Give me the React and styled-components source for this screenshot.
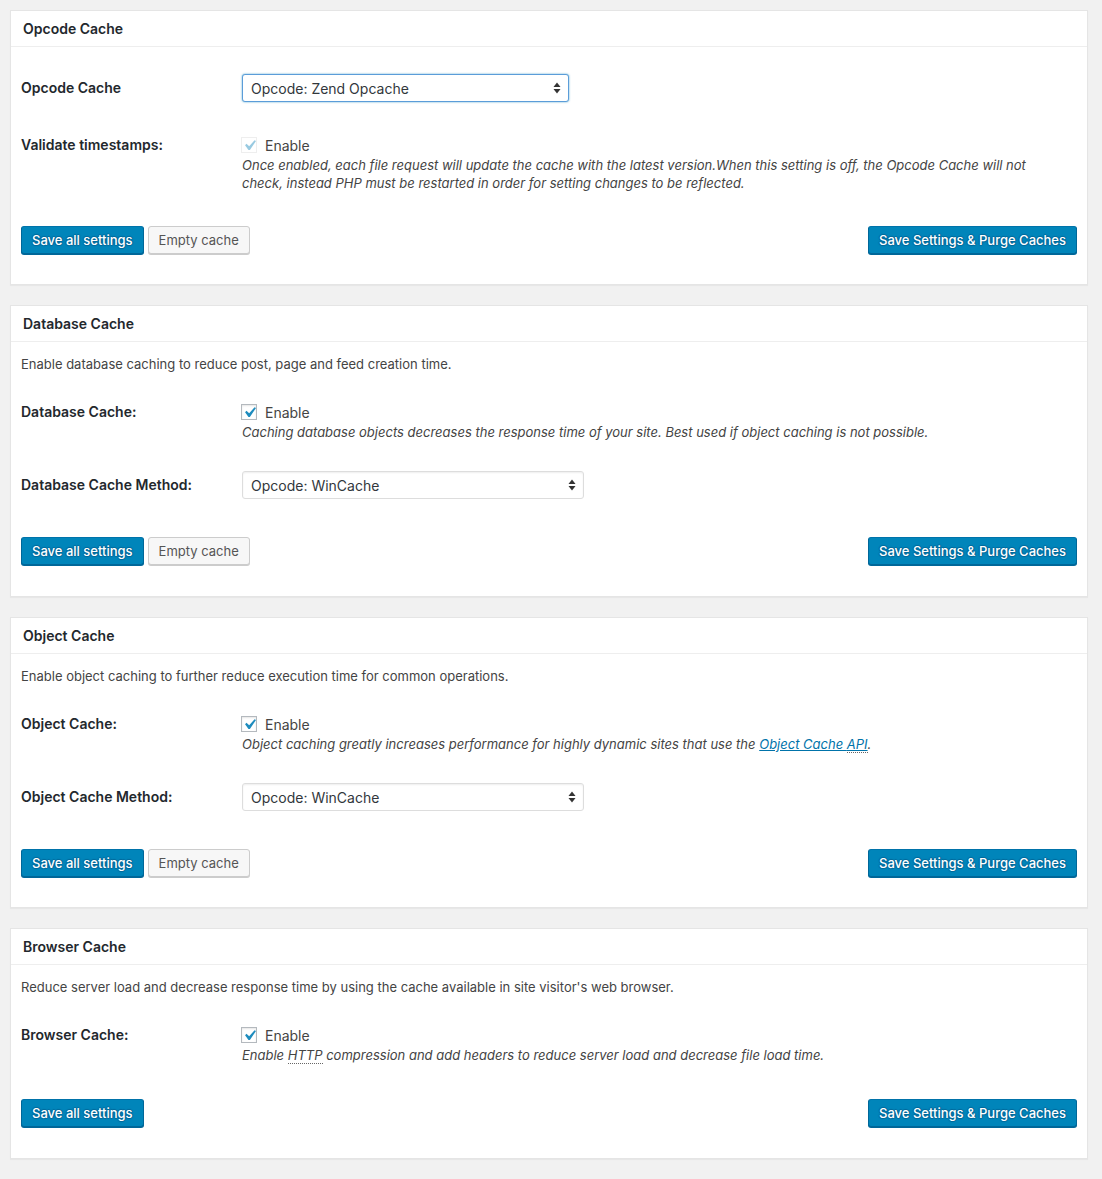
import styled, { createGlobalStyle } from "styled-components";

const GlobalStyle = createGlobalStyle`
  html, body {
    margin: 0;
    padding: 0;
    background: #f1f1f1;
  }
  body {
    font-family: Inter, "Liberation Sans", Arial, sans-serif;
    color: #444;
    font-size: 13px;
  }
`;

const Page = styled.div`
  padding: 10px 14px 10px 10px;
  display: flex;
  flex-direction: column;
  gap: 20px;
`;

const Panel = styled.section`
  background: #fff;
  border: 1px solid #e5e5e5;
  box-shadow: 0 1px 1px rgba(0, 0, 0, 0.04);
`;

const PanelHeader = styled.h2`
  margin: 0;
  height: 35px;
  line-height: 35px;
  padding: 0 12px;
  border-bottom: 1px solid #eee;
  font-size: 14px;
  font-weight: 600;
  color: #23282d;
`;

const PanelBody = styled.div`
  padding: 12px 10px ${(p) => p.$bottom || 31}px;
`;

const Intro = styled.p`
  margin: 1px 0 14px;
  line-height: 18px;
  font-size: 13px;
  color: #444;
`;

const Row = styled.div`
  display: grid;
  grid-template-columns: 221px 1fr;
  padding: ${(p) => p.$top || 15}px 10px 15px 0;
  align-items: ${(p) => (p.$center ? "center" : "start")};
`;

const Label = styled.div`
  font-size: 14px;
  font-weight: 600;
  color: #23282d;
  line-height: 20px;
`;

const Field = styled.div`
  display: flex;
  flex-direction: column;
`;

const CheckLine = styled.label`
  display: flex;
  align-items: center;
  gap: 8px;
  height: 20px;
  font-size: 14px;
  color: #444;
  margin-left: -1px;
`;

const Box = styled.span`
  position: relative;
  width: 16px;
  height: 16px;
  box-sizing: border-box;
  border: 1px solid ${(p) => (p.$disabled ? "#eee" : "#b4b9be")};
  background: #fff;
  box-shadow: ${(p) => (p.$disabled ? "none" : "inset 0 1px 2px rgba(0, 0, 0, 0.1)")};
  svg {
    position: absolute;
    left: -3px;
    top: -3px;
    opacity: ${(p) => (p.$disabled ? 0.45 : 1)};
  }
`;

const Desc = styled.p`
  margin: 1px 0 0;
  font-size: 13px;
  font-style: italic;
  line-height: 18px;
  color: #444;
  max-width: ${(p) => p.$max || "none"};
`;

const Link = styled.a`
  color: #0073aa;
  text-decoration: underline;
`;

const Abbr = styled.abbr`
  text-decoration: none;
  border-bottom: 1px dotted #666;
`;

const Select = styled.div`
  width: ${(p) => p.$width}px;
  height: 28px;
  box-sizing: border-box;
  border: 1px solid ${(p) => (p.$focus ? "#5b9dd9" : "#ddd")};
  box-shadow: ${(p) =>
    p.$focus ? "0 0 2px rgba(30, 140, 190, 0.8)" : "inset 0 1px 2px rgba(0,0,0,0.07)"};
  border-radius: 3px;
  background: #fff;
  display: flex;
  align-items: center;
  justify-content: space-between;
  padding: 0 7px 0 8px;
  font-size: 14px;
  color: #32373c;
`;

const Actions = styled.div`
  display: flex;
  align-items: center;
  margin-top: ${(p) => p.$gap || 23}px;
`;

const ButtonGroup = styled.div`
  display: flex;
  gap: 4px;
  flex: 1;
`;

const Button = styled.button`
  height: 28px;
  box-sizing: border-box;
  padding: 0 10px 1px;
  font-family: inherit;
  font-size: 13px;
  line-height: 26px;
  border-radius: 3px;
  border: 1px solid;
  cursor: pointer;
  ${(p) =>
    p.$primary
      ? `
    background: #0085ba;
    border-color: #0073aa #006799 #006799;
    box-shadow: 0 1px 0 #006799;
    color: #fff;
    font-weight: 500;
    text-shadow: 0 -1px 1px #006799, 1px 0 1px #006799, 0 1px 1px #006799, -1px 0 1px #006799;
  `
      : `
    background: #f7f7f7;
    border-color: #ccc;
    box-shadow: 0 1px 0 #ccc;
    color: #555;
  `}
`;

function Check({ disabled }) {
  return (
    <Box $disabled={disabled}>
      <svg width="21" height="21" viewBox="0 0 20 20">
        <path
          d="M14.83 4.89l1.34.94-5.81 8.38H9.02L5.78 9.67l1.34-1.25 2.57 2.4z"
          fill="#1e8cbe"
        />
      </svg>
    </Box>
  );
}

function Arrows() {
  return (
    <svg width="8" height="12" viewBox="0 0 8 12">
      <path d="M4 0.5L7.5 5H0.5z" fill="#333" />
      <path d="M4 11.5L7.5 7H0.5z" fill="#333" />
    </svg>
  );
}

function Dropdown({ value, width, focus }) {
  return (
    <Select $width={width} $focus={focus}>
      <span>{value}</span>
      <Arrows />
    </Select>
  );
}

function EnableField({ disabled, children, max }) {
  return (
    <Field>
      <CheckLine>
        <Check disabled={disabled} />
        Enable
      </CheckLine>
      <Desc $max={max}>{children}</Desc>
    </Field>
  );
}

function ActionBar({ empty = true, gap }) {
  return (
    <Actions $gap={gap}>
      <ButtonGroup>
        <Button $primary>Save all settings</Button>
        {empty && <Button>Empty cache</Button>}
      </ButtonGroup>
      <Button $primary>Save Settings &amp; Purge Caches</Button>
    </Actions>
  );
}

export default function App() {
  return (
    <>
      <GlobalStyle />
      <Page>
        <Panel>
          <PanelHeader>Opcode Cache</PanelHeader>
          <PanelBody $bottom={30}>
            <Row $center>
              <Label>Opcode Cache</Label>
              <Dropdown value="Opcode: Zend Opcache" width={327} focus />
            </Row>
            <Row $top={18}>
              <Label>Validate timestamps:</Label>
              <EnableField disabled max="800px">
                Once enabled, each file request will update the cache with the latest
                version.When this setting is off, the Opcode Cache will not check, instead
                PHP must be restarted in order for setting changes to be reflected.
              </EnableField>
            </Row>
            <ActionBar gap={19} />
          </PanelBody>
        </Panel>

        <Panel>
          <PanelHeader>Database Cache</PanelHeader>
          <PanelBody>
            <Intro>Enable database caching to reduce post, page and feed creation time.</Intro>
            <Row>
              <Label>Database Cache:</Label>
              <EnableField>
                Caching database objects decreases the response time of your site. Best
                used if object caching is not possible.
              </EnableField>
            </Row>
            <Row $center>
              <Label>Database Cache Method:</Label>
              <Dropdown value="Opcode: WinCache" width={342} />
            </Row>
            <ActionBar />
          </PanelBody>
        </Panel>

        <Panel>
          <PanelHeader>Object Cache</PanelHeader>
          <PanelBody $bottom={30}>
            <Intro>Enable object caching to further reduce execution time for common operations.</Intro>
            <Row>
              <Label>Object Cache:</Label>
              <EnableField>
                Object caching greatly increases performance for highly dynamic sites that
                use the{" "}
                <Link href="#">
                  Object Cache <Abbr title="Application Programming Interface">API</Abbr>
                </Link>
                .
              </EnableField>
            </Row>
            <Row $center>
              <Label>Object Cache Method:</Label>
              <Dropdown value="Opcode: WinCache" width={342} />
            </Row>
            <ActionBar />
          </PanelBody>
        </Panel>

        <Panel>
          <PanelHeader>Browser Cache</PanelHeader>
          <PanelBody>
            <Intro>
              Reduce server load and decrease response time by using the cache available in
              site visitor's web browser.
            </Intro>
            <Row>
              <Label>Browser Cache:</Label>
              <EnableField>
                Enable <Abbr title="Hypertext Transfer Protocol">HTTP</Abbr> compression and
                add headers to reduce server load and decrease file load time.
              </EnableField>
            </Row>
            <ActionBar empty={false} gap={20} />
          </PanelBody>
        </Panel>
      </Page>
    </>
  );
}
